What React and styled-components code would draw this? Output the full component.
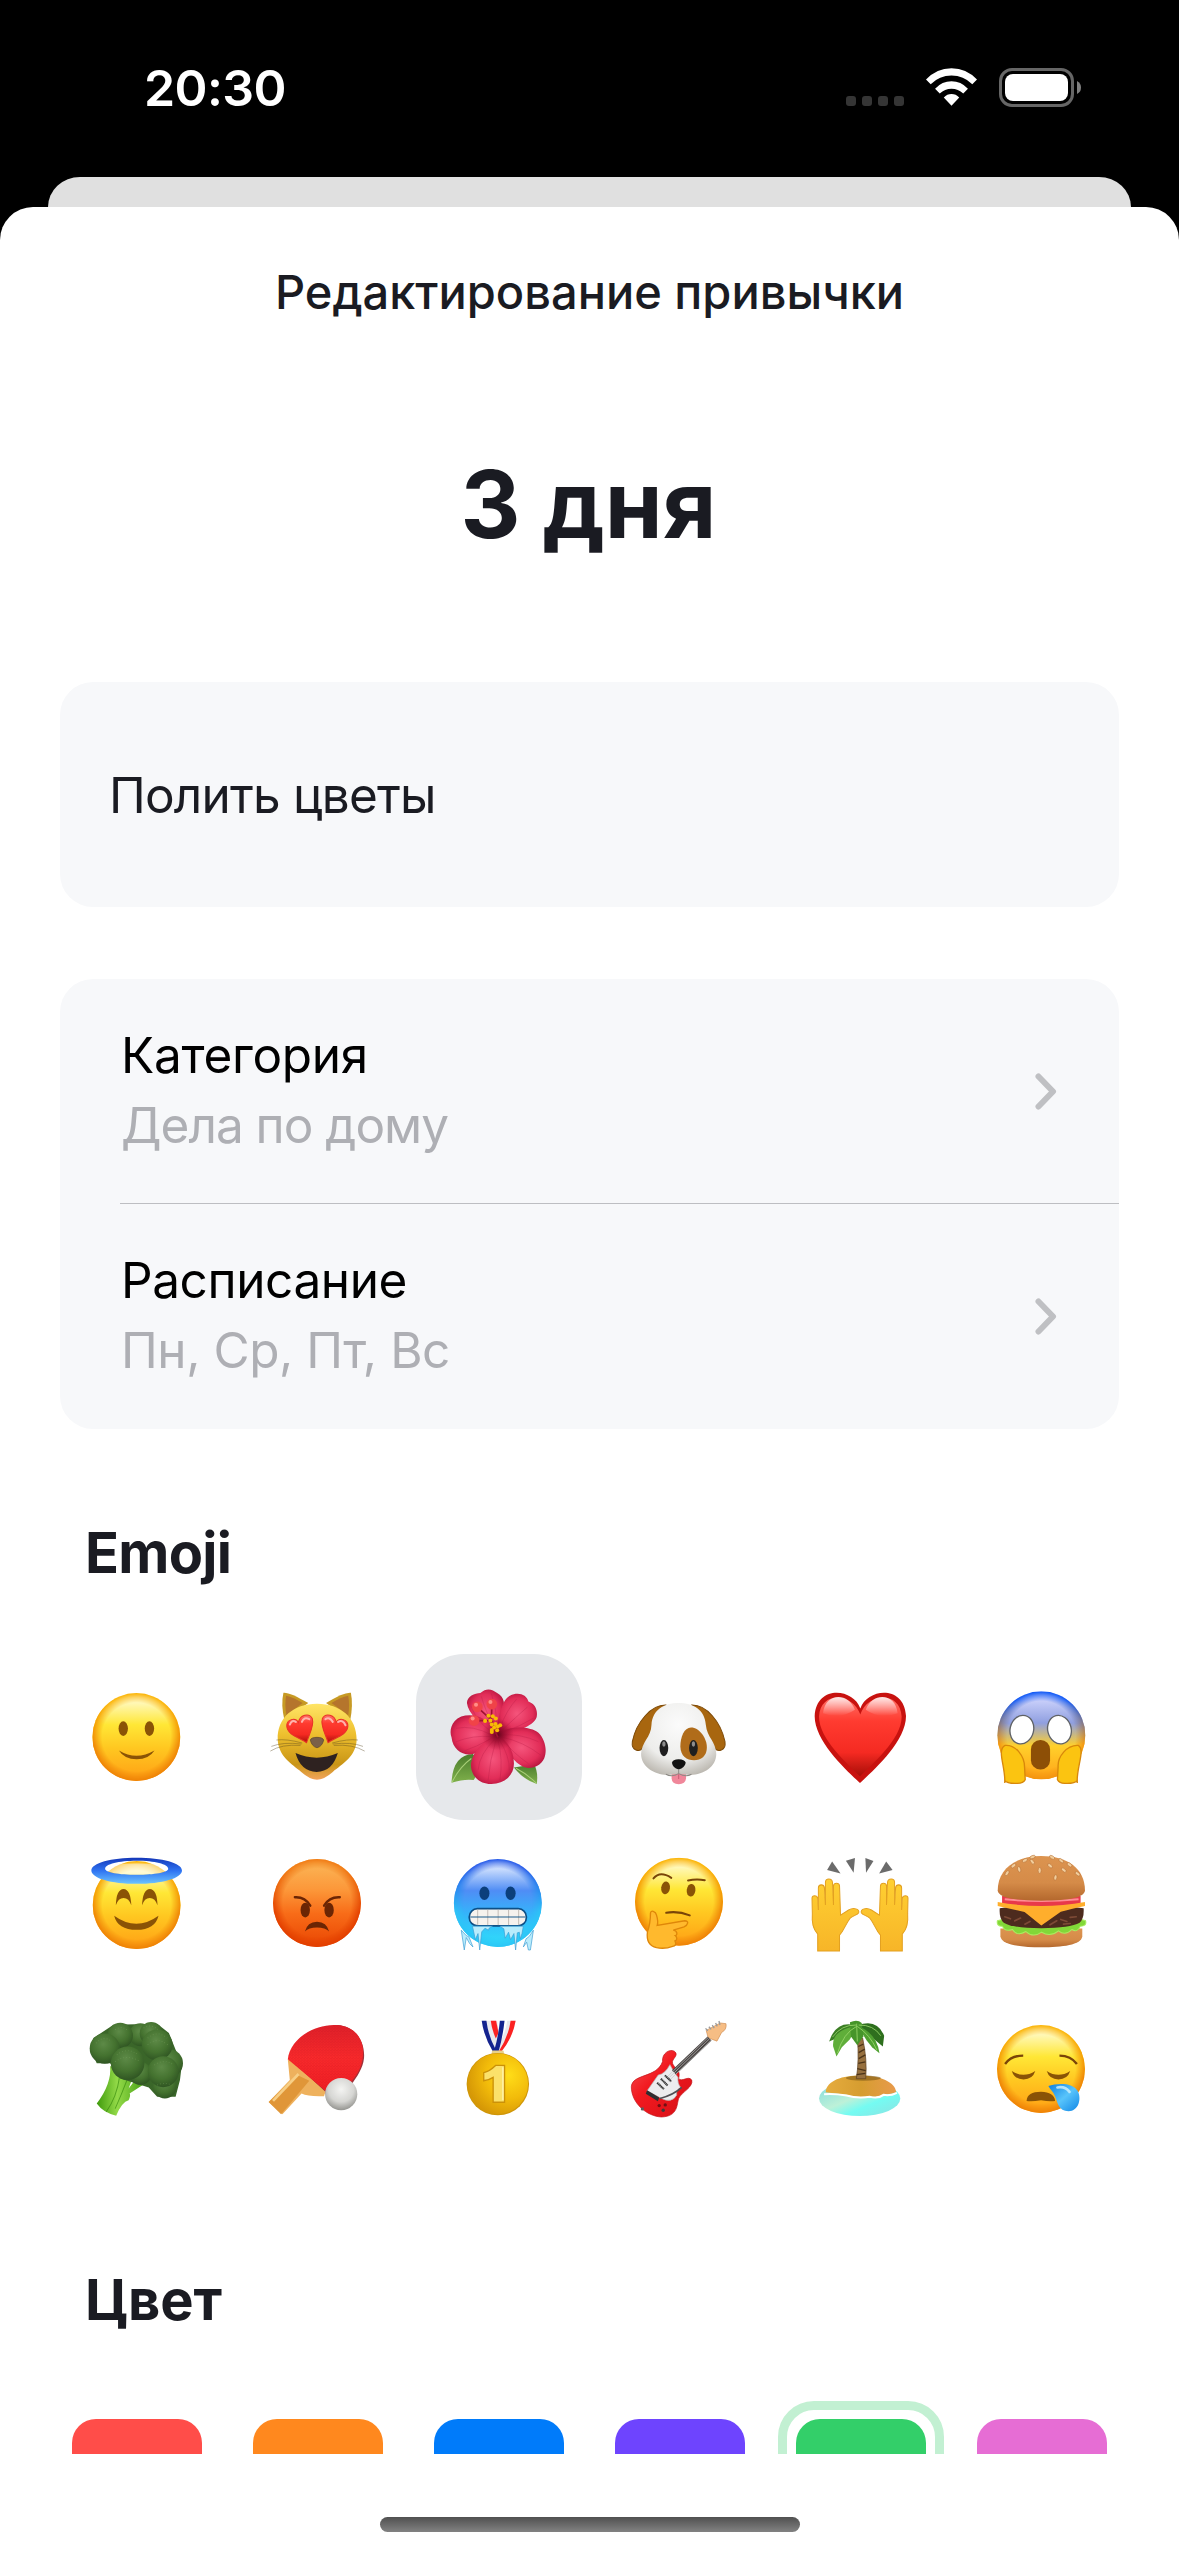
import React from "react";
import styled, { createGlobalStyle } from "styled-components";

const GlobalStyle = createGlobalStyle`
  * { box-sizing: border-box; }
  body {
    margin: 0;
    background: #000;
    font-family: Inter, "Liberation Sans", sans-serif;
  }
`;

const Screen = styled.div`
  display: flex;
  flex-direction: column;
  width: 1179px;
  height: 2556px;
  background: #000;
  overflow: hidden;
`;

const StatusBar = styled.header`
  display: flex;
  justify-content: space-between;
  align-items: flex-start;
  height: 177px;
  padding: 57px 98px 0 144px;
`;

const Time = styled.div`
  font-size: 50px;
  line-height: 62px;
  font-weight: 600;
  letter-spacing: -0.6px;
  color: #fff;
`;

const StatusIcons = styled.div`
  display: flex;
  padding-top: 11px;
`;

const Dots = styled.div`
  display: flex;
  gap: 6px;
  padding-top: 28px;
  margin-right: 22px;
`;

const Dot = styled.i`
  width: 10px;
  height: 10px;
  border-radius: 3px;
  background: #353535;
`;

const BackCard = styled.div`
  flex: none;
  height: 30px;
  margin: 0 48px;
  background: #e0e0e0;
  border-radius: 32px 32px 0 0 / 30px 30px 0 0;
`;

const Sheet = styled.main`
  flex: 1;
  display: flex;
  flex-direction: column;
  background: #fff;
  border-radius: 33px 33px 0 0;
`;

const Scroll = styled.div`
  flex: none;
  height: 2247px;
  overflow: hidden;
  padding-top: 55px;
`;

const Title = styled.h1`
  margin: 0;
  text-align: center;
  font-size: 47px;
  line-height: 60px;
  font-weight: 500;
  color: #1a1b22;
`;

const Days = styled.div`
  margin: 125px 2px 121px 0;
  text-align: center;
  font-size: 93px;
  line-height: 114px;
  font-weight: 700;
  color: #1a1b22;
`;

const Field = styled.div`
  display: flex;
  align-items: center;
  height: 225px;
  margin: 0 60px 72px;
  padding-left: 49px;
  border-radius: 33px;
  background: #f7f8fa;
  font-size: 49.5px;
  letter-spacing: -0.8px;
  color: #1a1b22;
`;

const Group = styled.div`
  margin: 0 60px;
  border-radius: 33px;
  background: #f7f8fa;
  overflow: hidden;
`;

const Row = styled.div`
  display: flex;
  align-items: center;
  justify-content: space-between;
  height: 225px;
  padding-right: 62px;
  margin-left: 60px;
  border-bottom: 1px solid ${(p) => (p.$last ? "transparent" : "#bdbec2")};
`;

const RowText = styled.div`
  padding: 0 0 2px 1px;
  font-size: 49.5px;
  line-height: 70px;
`;

const Label = styled.div`
  color: #000;
  letter-spacing: ${(p) => p.$track}px;
`;

const Value = styled.div`
  color: #aeafb4;
  letter-spacing: ${(p) => p.$track}px;
`;

const Heading = styled.h2`
  margin: ${(p) => p.$top}px 0 67px 85px;
  font-size: 56px;
  line-height: 68px;
  font-weight: 700;
  letter-spacing: ${(p) => p.$track}px;
  color: #1a1b22;
`;

const Grid = styled.div`
  display: grid;
  grid-template-columns: repeat(6, 166px);
  grid-auto-rows: 166px;
  column-gap: 15px;
  margin-left: 54px;
`;

const EmojiCell = styled.div`
  display: flex;
  align-items: center;
  justify-content: center;
  padding-right: 2px;
  border-radius: 48px;
  background: ${(p) => (p.$selected ? "#e6e8eb" : "transparent")};
`;

const SwatchCell = styled.div`
  padding: 9px;
  border: 9px solid ${(p) => (p.$selected ? "#c2f0d2" : "transparent")};
  border-radius: 36px;
`;

const Swatch = styled.div`
  height: 130px;
  border-radius: 24px;
  background: ${(p) => p.$color};
`;

const HomeBar = styled.div`
  width: 420px;
  height: 15px;
  margin: 63px auto 0;
  border-radius: 8px;
  background: linear-gradient(#505050, #828282);
`;

const DefsHolder = styled.svg`
  display: block;
  width: 0;
  height: 0;
`;

const stops = {
  yellow: ["#fffcd6", "#ffe736", "#ffc821", "#ff9e14"],
  angry: ["#fbb455", "#fc9638", "#f86c18", "#e94502"],
  cold: ["#e8f0ff", "#4f8df5", "#35b4fb", "#2fe0fa"],
  scream: ["#d3d8ff", "#8f9fe0", "#ffd02b", "#ffa318"],
};
const rims = {
  yellow: ["#fbb100", "#ee8206"],
  angry: ["#f07a14", "#e23f00"],
  cold: ["#1f55e8", "#2cc4f6"],
  scream: ["#0a55f5", "#f39410"],
};

const Defs = () => (
  <DefsHolder aria-hidden="true">
    <defs>
      {Object.entries(stops).map(([k, s]) => (
        <linearGradient key={k} id={`f-${k}`} x1="0" y1="0" x2="0" y2="1">
          <stop offset="0.05" stopColor={s[0]} />
          <stop offset="0.36" stopColor={s[1]} />
          <stop offset="0.62" stopColor={s[2]} />
          <stop offset="1" stopColor={s[3]} />
        </linearGradient>
      ))}
      {Object.entries(rims).map(([k, s]) => (
        <linearGradient key={k} id={`r-${k}`} x1="0" y1="0" x2="0" y2="1">
          <stop offset="0.1" stopColor={s[0]} />
          <stop offset="0.6" stopColor={s[1]} />
        </linearGradient>
      ))}
      <radialGradient id="rimFade">
        <stop offset="0.78" stopColor="#000" />
        <stop offset="0.93" stopColor="#a8a8a8" />
        <stop offset="1" stopColor="#fff" />
      </radialGradient>
      <mask id="rimMask" maskContentUnits="objectBoundingBox">
        <rect width="1" height="1" fill="url(#rimFade)" />
      </mask>
      <linearGradient id="cat" x1="0" y1="0" x2="0" y2="1">
        <stop offset="0" stopColor="#ffe566" />
        <stop offset="0.4" stopColor="#eec02f" />
        <stop offset="0.8" stopColor="#c99516" />
        <stop offset="1" stopColor="#f2a45c" />
      </linearGradient>
      <linearGradient id="heart" x1="0" y1="0" x2="0" y2="1">
        <stop offset="0" stopColor="#ff7168" />
        <stop offset="0.3" stopColor="#ff3b30" />
        <stop offset="0.7" stopColor="#f52a22" />
        <stop offset="1" stopColor="#a80e08" />
      </linearGradient>
      <linearGradient id="gloss" x1="0" y1="0" x2="0" y2="1">
        <stop offset="0" stopColor="#fff" stopOpacity="0.85" />
        <stop offset="1" stopColor="#fff" stopOpacity="0" />
      </linearGradient>
      <radialGradient id="petal" cx="0.5" cy="0.5" r="0.6">
        <stop offset="0" stopColor="#f5557c" />
        <stop offset="0.65" stopColor="#e22d58" />
        <stop offset="1" stopColor="#ad0f38" />
      </radialGradient>
      <radialGradient id="throat">
        <stop offset="0" stopColor="#65041b" />
        <stop offset="0.35" stopColor="#8d0a2a" stopOpacity="0.8" />
        <stop offset="1" stopColor="#a80f35" stopOpacity="0" />
      </radialGradient>
      <linearGradient id="leaf" x1="0" y1="0" x2="0" y2="1">
        <stop offset="0" stopColor="#4a7c2c" />
        <stop offset="1" stopColor="#7fb04b" />
      </linearGradient>
      <radialGradient id="dog" cx="0.5" cy="0.3" r="0.75">
        <stop offset="0" stopColor="#fbfbfb" />
        <stop offset="0.65" stopColor="#ededeb" />
        <stop offset="1" stopColor="#b9b5ad" />
      </radialGradient>
      <linearGradient id="hand" x1="0" y1="0" x2="0" y2="1">
        <stop offset="0" stopColor="#ffd032" />
        <stop offset="1" stopColor="#f7b528" />
      </linearGradient>
      <linearGradient id="halo" x1="0" y1="0" x2="0" y2="1">
        <stop offset="0" stopColor="#1437b8" />
        <stop offset="0.5" stopColor="#2f74f2" />
        <stop offset="1" stopColor="#6cc4ff" />
      </linearGradient>
      <linearGradient id="bun" x1="0" y1="0" x2="0" y2="1">
        <stop offset="0" stopColor="#dc9450" />
        <stop offset="0.6" stopColor="#d58b48" />
        <stop offset="1" stopColor="#b4682d" />
      </linearGradient>
      <radialGradient id="brocc" cx="0.45" cy="0.35" r="0.65">
        <stop offset="0" stopColor="#5d8a47" />
        <stop offset="0.6" stopColor="#44722f" />
        <stop offset="1" stopColor="#305623" />
      </radialGradient>
      <linearGradient id="stem">
        <stop offset="0" stopColor="#3f9a0c" />
        <stop offset="0.4" stopColor="#93da48" />
        <stop offset="1" stopColor="#3f9a10" />
      </linearGradient>
      <linearGradient id="paddle" x1="0" y1="0" x2="0" y2="1">
        <stop offset="0" stopColor="#e0202a" />
        <stop offset="0.5" stopColor="#fb2a2c" />
        <stop offset="1" stopColor="#f21e24" />
      </linearGradient>
      <radialGradient id="ball" cx="0.5" cy="0.35" r="0.65">
        <stop offset="0" stopColor="#f4f4f2" />
        <stop offset="0.6" stopColor="#d6d6d3" />
        <stop offset="1" stopColor="#949490" />
      </radialGradient>
      <radialGradient id="gold" cx="0.68" cy="0.36" r="0.7">
        <stop offset="0" stopColor="#ffdd18" />
        <stop offset="0.55" stopColor="#f2bb0a" />
        <stop offset="1" stopColor="#d69806" />
      </radialGradient>
      <linearGradient id="sea" x1="0" y1="0" x2="1" y2="1">
        <stop offset="0" stopColor="#7fd9dd" />
        <stop offset="0.45" stopColor="#bdf1d8" />
        <stop offset="0.65" stopColor="#74fbf2" />
        <stop offset="1" stopColor="#8fe0e0" />
      </linearGradient>
      <linearGradient id="sand">
        <stop offset="0" stopColor="#e6ac3e" />
        <stop offset="0.5" stopColor="#d69d30" />
        <stop offset="1" stopColor="#e89a4c" />
      </linearGradient>
      <linearGradient id="drop" x1="0" y1="0" x2="1" y2="1">
        <stop offset="0" stopColor="#0d7fe0" />
        <stop offset="0.5" stopColor="#58c4fb" />
        <stop offset="1" stopColor="#0f86e6" />
      </linearGradient>
      <linearGradient id="guitar" x1="0" y1="0" x2="1" y2="1">
        <stop offset="0" stopColor="#f4585a" />
        <stop offset="0.4" stopColor="#f21a20" />
        <stop offset="1" stopColor="#d50f15" />
      </linearGradient>
      <pattern id="weave" width="9" height="8" patternUnits="userSpaceOnUse">
        <path d="M0 2H6M4 6H9" stroke="#b80f18" strokeWidth="1.6" opacity="0.4" />
      </pattern>
    </defs>
  </DefsHolder>
);

const Face = ({ cx, cy, r = 131, kind = "yellow" }) => (
  <>
    <circle cx={cx} cy={cy} r={r} fill={`url(#f-${kind})`} />
    <circle cx={cx} cy={cy} r={r} fill={`url(#r-${kind})`} mask="url(#rimMask)" />
  </>
);

const Smile = () => (
  <>
    <Face cx={228} cy={261} />
    <g fill="#8a5306">
      <ellipse cx="189" cy="236" rx="14" ry="22" />
      <ellipse cx="267" cy="236" rx="14" ry="22" />
      <path d="M176 301Q228 332 282 301Q266 327 229 327Q192 327 176 301Z" />
    </g>
  </>
);

const eyeHeart =
  "M740 278C725 265 682 256 681 229C680 207 707 202 716 218C719 194 748 188 757 206C764 228 746 255 740 278Z";

const CatHearts = () => (
  <>
    <path d="M671 129Q690 127 745 160L674 210Q663 165 671 129Z" fill="#c79a24" />
    <path d="M679 138Q700 142 728 160L680 196Q674 165 679 138Z" fill="#b5752c" />
    <path d="M872 129Q850 127 798 160L870 210Q879 165 872 129Z" fill="#c79a24" />
    <path d="M864 138Q842 142 814 160L864 196Q869 165 864 138Z" fill="#b5752c" />
    <path d="M654 268C652 205 700 162 771 162C842 162 889 205 889 268C889 318 846 342 818 365Q792 388 771 388Q750 388 724 365C696 342 655 318 654 268Z" fill="url(#cat)" />
    <g stroke="#55431c" strokeWidth="1.5" fill="none" opacity="0.8">
      <path d="M725 282Q670 275 635 289M722 286Q665 282 632 303M727 279Q680 266 650 270" />
      <path d="M818 282Q873 275 908 289M821 286Q878 282 913 303M816 279Q863 266 893 270" />
    </g>
    <path d={eyeHeart} fill="url(#heart)" stroke="#e83028" strokeWidth="3" />
    <path d={eyeHeart} fill="url(#heart)" stroke="#e83028" strokeWidth="3" transform="translate(1544 0) scale(-1 1)" />
    <path d="M690 224Q696 208 708 216M726 216Q732 200 748 208M796 208Q808 200 818 216M834 216Q848 208 856 226" fill="none" stroke="#ffb3ad" strokeWidth="6" strokeLinecap="round" />
    <path d="M751 270Q754 262 771 262Q788 262 791 270Q786 290 771 293Q756 290 751 270Z" fill="#7a6048" stroke="#56432e" strokeWidth="2" />
    <path d="M707 309Q770 336 833 309Q817 365 770 365Q722 364 707 309Z" fill="#2e2220" />
  </>
);

const Flower = () => (
  <>
    <path d="M190 312Q130 315 126 397Q165 385 192 389Q220 350 190 312Z" fill="url(#leaf)" />
    <path d="M185 325Q150 350 128 395" fill="none" stroke="#a9cf78" strokeWidth="3" />
    <path d="M312 352Q340 388 380 401Q385 365 372 342Z" fill="url(#leaf)" />
    <path d="M318 354Q350 370 378 398" fill="none" stroke="#a9cf78" strokeWidth="3" />
    <path d="M262 252C210 225 175 190 172 160C172 140 195 130 212 130C232 112 248 120 262 130C285 142 286 165 278 190Z" fill="url(#petal)" />
    <path d="M262 252C262 210 275 150 300 138C325 125 350 135 355 155C375 162 383 180 380 200C376 225 320 250 262 252Z" fill="url(#petal)" />
    <path d="M262 252C235 200 190 190 155 200C122 215 120 245 126 262C130 300 160 318 190 312C225 305 240 270 262 252Z" fill="url(#petal)" />
    <path d="M262 252C300 225 360 228 385 248C405 268 412 300 402 325C390 352 355 358 340 350C300 330 280 280 262 252Z" fill="url(#petal)" />
    <path d="M262 252C225 270 190 300 184 340C182 378 210 402 245 401C285 400 312 375 312 340C312 300 290 270 262 252Z" fill="url(#petal)" />
    <g stroke="#b31a43" strokeWidth="2" fill="none" opacity="0.45">
      <path d="M245 245Q200 215 185 170M255 235Q225 180 215 140M262 225Q260 180 245 132" />
      <path d="M270 235Q290 180 320 148M275 242Q320 200 352 172M280 246Q330 230 370 205" />
      <path d="M245 255Q190 225 140 235M245 260Q190 255 140 275M240 268Q200 290 165 302" />
      <path d="M275 255Q330 250 385 275M278 262Q340 275 392 315M278 268Q310 310 355 340" />
      <path d="M255 268Q210 310 205 360M258 272Q240 330 235 390M265 272Q280 330 270 390M268 268Q300 320 298 360" />
    </g>
    <circle cx="264" cy="254" r="48" fill="url(#throat)" />
    <path d="M264 262L236 195M250 215L203 172M245 218L246 165M238 212L193 212" stroke="#9f1231" strokeWidth="5" fill="none" />
    <g fill="#f04348">
      <circle cx="203" cy="171" r="16" />
      <circle cx="246" cy="163" r="16" />
      <circle cx="193" cy="212" r="16" />
    </g>
    <g fill="#ff8f89">
      <circle cx="199" cy="165" r="6" />
      <circle cx="242" cy="157" r="6" />
      <circle cx="189" cy="206" r="6" />
    </g>
    <g fill="#f7bb06">
      {[[236, 198], [249, 199], [226, 213], [242, 212], [258, 206], [246, 224], [257, 222], [271, 226], [246, 240], [253, 233], [262, 241], [246, 246], [264, 230]].map(([x, y]) => (
        <circle key={`${x}-${y}`} cx={x} cy={y} r="6" />
      ))}
    </g>
  </>
);

const Dog = () => (
  <>
    <path d="M768 166C725 165 680 215 668 275C664 302 690 308 700 292C720 262 735 235 768 166Z" fill="#a8660f" stroke="#7d4a08" strokeWidth="3" />
    <path d="M845 166C888 165 932 215 944 275C948 302 922 308 912 292C892 262 878 235 845 166Z" fill="#a8660f" stroke="#7d4a08" strokeWidth="3" />
    <path d="M785 365H828V385Q826 402 806 402Q786 402 785 385Z" fill="#f0879a" />
    <path d="M806 160C762 160 728 180 725 225C724 262 695 275 694 312C694 350 735 374 770 374Q790 374 806 370Q822 374 842 374C880 374 918 350 918 312C918 275 890 262 887 225C884 180 850 160 806 160Z" fill="url(#dog)" />
    <path d="M843 233C868 233 890 265 890 292C890 318 872 330 852 330C830 330 812 318 811 290C811 262 822 233 843 233Z" fill="#b06c1a" />
    <ellipse cx="762" cy="294" rx="13" ry="24" fill="#1f1f1f" />
    <ellipse cx="850" cy="294" rx="13" ry="24" fill="#1f1f1f" />
    <ellipse cx="762" cy="282" rx="5" ry="8" fill="#8d8d8d" />
    <ellipse cx="850" cy="282" rx="5" ry="8" fill="#8d8d8d" />
    <path d="M786 338Q788 327 806 327Q824 327 827 338Q824 354 806 358Q788 354 786 338Z" fill="#111" />
    <path d="M806 358V370M806 370Q785 382 768 372M806 370Q828 382 844 372" stroke="#8d8a85" strokeWidth="3" fill="none" />
    <path d="M806 372V386" stroke="#c75f74" strokeWidth="3" />
  </>
);

const Heart = () => (
  <>
    <path d="M271 176C250 115 140 105 135 198C134 275 235 365 270 398C305 365 408 275 407 198C402 105 292 115 271 176Z" fill="#c8120f" />
    <path d="M271 194C248 128 152 122 148 200C147 268 238 345 270 378C302 345 395 268 394 200C390 122 292 128 271 194Z" fill="url(#heart)" />
    <path d="M160 190C165 130 235 125 255 180Q210 210 160 190ZM382 190C377 130 307 125 287 180Q330 210 382 190Z" fill="url(#gloss)" />
  </>
);

const Scream = () => (
  <>
    <Face cx={814} cy={256} kind="scream" />
    <ellipse cx="756" cy="239" rx="35" ry="43" fill="#fff" stroke="#5f6266" strokeWidth="4" transform="rotate(14 756 239)" />
    <ellipse cx="868" cy="239" rx="35" ry="43" fill="#fff" stroke="#5f6266" strokeWidth="4" transform="rotate(-14 868 239)" />
    <rect x="783" y="270" width="57" height="88" rx="28" fill="#8d4f06" />
    <path d="M705 398C708 350 680 300 706 286C740 284 764 320 764 350L766 388Q760 400 740 399Q712 400 705 390Z" fill="#fbc411" stroke="#d8880b" strokeWidth="4" />
    <path d="M921 398C918 350 946 300 924 286C890 284 862 320 864 350L862 388Q868 400 886 399Q914 400 921 390Z" fill="#fbc411" stroke="#d8880b" strokeWidth="4" />
  </>
);

const Angel = () => (
  <>
    <Face cx={229} cy={765} />
    <g fill="#8a5306">
      <path d="M167 766Q168 718 190 717Q211 718 213 766Q206 744 190 744Q174 744 167 766Z" />
      <path d="M245 766Q247 718 268 717Q290 718 291 766Q284 744 268 744Q252 744 245 766Z" />
      <path d="M162 797Q228 845 294 797Q284 839 229 839Q172 839 162 797Z" />
    </g>
    <ellipse cx="229" cy="658" rx="94" ry="17" fill="#fff" opacity="0.45" />
    <path d="M229 624C305 624 364 640 364 662C364 685 305 702 229 702C153 702 94 685 94 662C94 640 153 624 229 624ZM229 633C176 633 135 643 135 657C135 668 176 675 229 675C282 675 323 668 323 657C323 643 282 633 229 633Z" fill="url(#halo)" fillRule="evenodd" />
  </>
);

const Angry = () => (
  <>
    <Face cx={771} cy={759} kind="angry" />
    <g fill="#6b2504">
      <ellipse cx="736" cy="780" rx="14" ry="22" />
      <ellipse cx="807" cy="780" rx="14" ry="22" />
      <path d="M735 844Q742 816 771 815Q800 816 807 844Q796 832 771 832Q746 832 735 844Z" />
    </g>
    <path d="M705 742Q735 740 751 767M839 742Q808 740 792 767" fill="none" stroke="#6b2504" strokeWidth="7" strokeLinecap="round" />
  </>
);

const Cold = () => (
  <>
    <Face cx={264} cy={759} kind="cold" />
    <ellipse cx="224" cy="730" rx="15" ry="20" fill="#0b3f7c" />
    <ellipse cx="302" cy="730" rx="15" ry="20" fill="#0b3f7c" />
    <rect x="179" y="776" width="170" height="51" rx="24" fill="#f6f2ee" stroke="#0d4f86" strokeWidth="5" />
    <path d="M204 779V825M234 779V825M265 779V825M296 779V825M326 779V825" stroke="#b9b2ac" strokeWidth="2.5" />
    <path d="M182 801H346" stroke="#1d5c8c" strokeWidth="3" />
    <path d="M188 828H248L238 834L236 840L226 834L216 845L210 899L205 850L197 868L190 835ZM270 828H340L336 850L331 866L328 846L322 848L317 899L312 850L302 868L296 846L286 864L282 836ZM155 840L170 856L178 860L190 890L180 880L170 862L164 899ZM370 840L358 858L348 866L340 890L350 876L355 899L361 899Z" fill="#b9ecfc" stroke="#3a9cd4" strokeWidth="2" />
  </>
);

const Thinking = () => (
  <>
    <Face cx={807} cy={755} />
    <ellipse cx="767" cy="714" rx="13" ry="19" fill="#8a5306" transform="rotate(8 767 714)" />
    <ellipse cx="843" cy="721" rx="13" ry="19" fill="#8a5306" transform="rotate(8 843 721)" />
    <path d="M731 686Q750 662 784 684M834 692Q858 686 884 691M769 788Q805 782 839 796" fill="none" stroke="#7a4508" strokeWidth="6" strokeLinecap="round" />
    <path d="M722 790C722 778 738 784 740 795Q746 815 742 826L824 812C838 812 834 824 822 830L790 840C804 842 802 856 796 856C802 862 802 870 795 872C800 882 796 888 788 888Q765 897 740 892C714 886 710 868 713 845Q722 820 722 790Z" fill="#ffb92d" stroke="#df8709" strokeWidth="4" />
  </>
);

const palm =
  "M144 902V852C128 835 126 815 128 790L127 745C127 735 142 735 144 745L146 780V714C146 702 163 702 164 714L167 765V698C167 684 187 684 188 698L191 765V708C192 698 208 698 209 708L212 795L236 780C250 772 270 776 266 788C262 796 250 795 240 805C225 825 222 842 209 855V902Z";

const Hands = () => (
  <>
    <path d={palm} fill="url(#hand)" stroke="#e3a020" strokeWidth="3" />
    <path d={palm} fill="url(#hand)" stroke="#e3a020" strokeWidth="3" transform="translate(540 0) scale(-1 1)" />
    <g fill="#6b6b6b">
      <path d="M187 635L172 661L212 671Z" />
      <path d="M228 633L255 625L251 669Z" />
      <path d="M286 625L310 634L288 669Z" />
      <path d="M348 635L367 661L327 671Z" />
    </g>
  </>
);

const Burger = () => (
  <>
    <path d="M692 835H936V858C934 884 875 891 814 891C753 891 695 884 692 858Z" fill="url(#bun)" />
    <path d="M683 812Q720 800 814 800Q910 800 946 812Q950 828 930 828Q922 848 905 838Q885 858 865 842Q840 862 815 846Q790 864 768 844Q742 860 728 838Q705 846 698 828Q680 828 683 812Z" fill="#82d838" stroke="#a8ec60" strokeWidth="3" />
    <path d="M690 775Q814 755 940 775Q942 805 928 818Q900 834 814 834Q728 834 702 818Q688 805 690 775Z" fill="#4d2b1e" />
    <path d="M705 800L722 806M735 812L752 804M765 822L780 814M840 824L860 812M872 808L890 814M900 802L918 800M880 822L900 820" stroke="#7d4a36" strokeWidth="5" strokeLinecap="round" />
    <path d="M697 738H931V768H697Z" fill="#e8394a" />
    <path d="M705 748Q814 758 925 748" stroke="#ff8d94" strokeWidth="6" fill="none" />
    <path d="M684 756Q814 780 944 756L944 768Q900 778 872 785L814 826L764 786Q720 776 684 768Z" fill="#ffae2c" />
    <path d="M684 722C684 655 740 619 814 619C890 619 944 655 944 722C942 742 900 752 814 752C728 752 686 742 684 722Z" fill="url(#bun)" />
    <g fill="#f2cd9b">
      {[[712, 670, 35], [748, 659, -15], [731, 648, 50], [787, 636, -40], [809, 662, 0], [840, 648, -50], [856, 683, 10], [881, 661, -50], [873, 633, -50], [765, 632, 60], [898, 645, -50], [922, 672, -50], [846, 623, -60], [788, 622, 70]].map(([x, y, a]) => (
        <ellipse key={`${x}-${y}`} cx={x} cy={y} rx="4.5" ry="8.5" transform={`rotate(${a} ${x} ${y})`} stroke="#b26d34" strokeWidth="1.5" />
      ))}
    </g>
  </>
);

const Broccoli = () => (
  <>
    <path d="M150 1248Q155 1300 110 1360Q130 1388 168 1396Q185 1355 205 1350Q212 1335 208 1330L262 1295L232 1280L205 1315L218 1280Z" fill="url(#stem)" />
    <path d="M178 1280Q170 1340 138 1385M200 1290Q185 1330 165 1375" stroke="#2f8208" strokeWidth="3" fill="none" opacity="0.6" />
    <path d="M100 1165L160 1125L290 1122L325 1150L345 1200L364 1240L358 1290L345 1340L290 1340L265 1312L180 1285L150 1240L110 1240L92 1200Z" fill="#3a6629" />
    <g fill="url(#brocc)">
      <circle cx="240" cy="1155" r="34" />
      <circle cx="325" cy="1240" r="42" />
      <circle cx="313" cy="1310" r="35" />
      <circle cx="272" cy="1151" r="34" />
      <circle cx="180" cy="1157" r="38" />
      <circle cx="134" cy="1196" r="45" />
      <circle cx="240" cy="1270" r="34" />
      <circle cx="290" cy="1185" r="46" />
      <circle cx="308" cy="1265" r="46" />
      <circle cx="202" cy="1240" r="50" />
    </g>
    <g stroke="#7fa865" strokeWidth="3" strokeDasharray="2 7" fill="none" opacity="0.5">
      <path d="M108 1180Q130 1155 155 1175M165 1140Q185 1125 205 1145M170 1215Q200 1190 235 1215M165 1235Q200 1210 240 1235M262 1165Q290 1140 320 1165M262 1185Q290 1160 322 1185M282 1245Q310 1225 340 1245M250 1135Q272 1120 292 1140M290 1305Q310 1295 335 1305" />
    </g>
  </>
);

const PingPong = () => (
  <>
    <path d="M830 1126C890 1130 915 1180 911 1225C908 1255 890 1280 876 1300L800 1335L715 1255Z" fill="#a03038" />
    <path d="M684 1228L700 1236L796 1325L792 1338Q745 1340 725 1330L668 1392L627 1355L690 1290Z" fill="#eeb15d" />
    <path d="M712 1275L748 1292L664 1392L627 1355Z" fill="#e09638" />
    <path d="M716 1272L640 1352" stroke="#f7cf86" strokeWidth="8" />
    <path d="M684 1228C690 1170 760 1122 830 1126C890 1130 912 1175 908 1215C905 1255 888 1278 868 1300L796 1322Z" fill="url(#paddle)" />
    <path d="M684 1228C690 1170 760 1122 830 1126C890 1130 912 1175 908 1215C905 1255 888 1278 868 1300L796 1322Z" fill="url(#weave)" />
    <circle cx="843" cy="1332" r="48" fill="url(#ball)" />
  </>
);

const Medal = () => (
  <>
    <path d="M292 1113H317Q308 1165 272 1206H254Q286 1160 292 1113Z" fill="#e9e9ee" />
    <path d="M302 1113H317Q308 1165 274 1206H266Q296 1160 302 1113Z" fill="#fb2222" />
    <path d="M216 1113H262Q268 1160 280 1180L262 1206H250Q222 1160 216 1113Z" fill="#e9e9ee" />
    <path d="M216 1113H230Q236 1160 258 1200L250 1206Q222 1160 216 1113Z" fill="#14238f" />
    <path d="M243 1113H259L266 1150L258 1166Q246 1140 243 1113Z" fill="#fb2222" />
    <path d="M270 1113H284Q278 1165 266 1206H252Q266 1160 270 1113Z" fill="#14238f" />
    <rect x="246" y="1202" width="36" height="14" rx="4" fill="#e8d08a" />
    <circle cx="264" cy="1302" r="93" fill="#cf9608" />
    <circle cx="264" cy="1301" r="90" fill="url(#gold)" />
    <path d="M284 1246H258Q240 1264 222 1268V1292Q238 1290 250 1282V1356H284Z" fill="#fbe16a" stroke="#cb9108" strokeWidth="4" />
    <path d="M279 1252V1350" stroke="#fff3b0" strokeWidth="4" />
  </>
);

const Guitar = () => (
  <>
    <path d="M888 1142L930 1120L947 1122Q950 1140 934 1148L920 1174L894 1164Z" fill="#f6bd84" stroke="#cf8d52" strokeWidth="2" />
    <path d="M886 1136L893 1143M896 1131L903 1139M906 1126L912 1135M916 1120L921 1130M926 1114L929 1126" stroke="#9b9b9b" strokeWidth="4" />
    <path d="M758 1235C755 1205 790 1192 798 1210C802 1222 780 1230 790 1245C800 1260 812 1262 806 1285C815 1298 835 1275 845 1290C850 1312 815 1325 806 1345C800 1362 805 1398 755 1400C710 1398 665 1358 665 1310C668 1270 740 1285 758 1235Z" fill="url(#guitar)" stroke="#c01016" strokeWidth="2" />
    <path d="M780 1244L790 1262L804 1282Q802 1300 812 1312Q798 1318 800 1335Q785 1360 755 1345L712 1322L745 1275Q765 1272 780 1244Z" fill="#ececee" stroke="#b5b5b5" strokeWidth="2" />
    <path d="M792 1267L898 1166" stroke="#4a4543" strokeWidth="17" />
    <path d="M768 1284L894 1163M771 1289L898 1167M776 1293L902 1172" stroke="#c4c4c4" strokeWidth="2" />
    <path d="M742 1298L762 1317M753 1286L773 1306M765 1276L784 1294" stroke="#333" strokeWidth="6" strokeDasharray="4 1" />
    <path d="M712 1320L748 1342L744 1353L708 1331Z" fill="#2e2e30" />
    <path d="M750 1345Q790 1335 815 1312" stroke="#4f4f54" strokeWidth="5" fill="none" />
    <circle cx="748" cy="1366" r="5" fill="#701014" />
    <circle cx="766" cy="1364" r="5" fill="#701014" />
    <circle cx="760" cy="1380" r="5" fill="#3a3a3a" />
    <circle cx="698" cy="1376" r="5" fill="#5b5b5b" />
  </>
);

const Island = () => (
  <>
    <ellipse cx="269" cy="1345" rx="121" ry="52" fill="url(#sea)" />
    <path d="M168 1326C170 1290 220 1276 270 1276C330 1276 375 1295 378 1326Q360 1334 340 1332Q325 1345 300 1338Q260 1345 230 1334Q195 1330 168 1326Z" fill="url(#sand)" />
    <path d="M163 1332Q195 1330 230 1336Q262 1346 300 1340Q325 1346 340 1334Q360 1338 380 1328" stroke="#fff" strokeWidth="6" fill="none" />
    <ellipse cx="280" cy="1284" rx="52" ry="8" fill="#7f5a18" opacity="0.6" />
    <path d="M262 1165H278Q292 1230 287 1286H259Q268 1230 262 1165Z" fill="#96703f" stroke="#5b3f20" strokeWidth="2" />
    <path d="M265 1190L280 1183M266 1208L284 1198M266 1226L286 1215M265 1240L286 1236M262 1256L287 1262M260 1274L286 1270" stroke="#4b3318" strokeWidth="4" />
    <path d="M262 1128Q200 1108 178 1175Q225 1158 262 1128Z" fill="#3a7d24" />
    <path d="M262 1128Q320 1105 342 1158L338 1190Q300 1158 262 1128Z" fill="#2e6f1e" />
    <path d="M262 1128Q185 1140 190 1190L200 1220L216 1192L228 1180L240 1168Z" fill="#5fae3a" />
    <path d="M262 1128Q320 1150 328 1210L306 1192L290 1172Z" fill="#4fa030" />
    <path d="M240 1118Q262 1108 275 1120L280 1160L262 1186L243 1160Z" fill="#46952a" />
    <path d="M260 1130Q220 1150 203 1210M262 1130Q300 1155 320 1200M260 1122L262 1175M258 1126Q215 1125 188 1162M266 1126Q310 1125 332 1158" stroke="#9bd86c" strokeWidth="2.5" fill="none" />
  </>
);

const Sleepy = () => (
  <>
    <Face cx={813} cy={1257} />
    <path d="M706 1242Q724 1217 760 1217M920 1242Q902 1217 868 1217" fill="none" stroke="#7a4508" strokeWidth="7" />
    <g fill="#8a5306">
      <path d="M726 1263Q760 1286 796 1263Q788 1288 761 1288Q734 1288 726 1263Z" />
      <path d="M830 1263Q865 1286 900 1263Q892 1288 865 1288Q838 1288 830 1263Z" />
      <path d="M770 1352Q772 1325 813 1325Q852 1326 855 1352Q840 1355 813 1350Q785 1355 770 1352Z" />
    </g>
    <path d="M835 1308C860 1300 905 1296 922 1322C935 1345 925 1383 895 1383C865 1382 862 1356 855 1338C850 1325 840 1318 835 1308Z" fill="url(#drop)" />
    <path d="M862 1312Q885 1308 898 1325" stroke="#d2f2ff" strokeWidth="8" strokeLinecap="round" fill="none" opacity="0.8" />
  </>
);

const emojis = [
  ["smile", 84, 118, Smile],
  ["cat", 628, 118, CatHearts],
  ["flower", 121.5, 118, Flower],
  ["dog", 664, 118, Dog],
  ["heart", 127, 118, Heart],
  ["scream", 670, 118, Scream],
  ["angel", 84, 616, Angel],
  ["angry", 628, 616, Angry],
  ["cold", 121.5, 616, Cold],
  ["thinking", 664, 616, Thinking],
  ["hands", 127, 616, Hands],
  ["burger", 670, 616, Burger],
  ["broccoli", 84, 1114, Broccoli],
  ["pingpong", 628, 1114, PingPong],
  ["medal", 121.5, 1114, Medal],
  ["guitar", 664, 1114, Guitar],
  ["island", 127, 1114, Island],
  ["sleepy", 670, 1114, Sleepy],
];

const EmojiIcon = styled.svg`
  display: block;
  width: 96px;
  height: 96px;
  overflow: visible;
`;

const colors = ["#ff4d49", "#ff881e", "#007bfa", "#6e44fe", "#33cf69", "#e66dd4"];

const Wifi = () => (
  <svg width="51" height="38" viewBox="0 0 152 112">
    <g fill="#fff">
      <path d="M0 34Q31 0 76 0Q121 0 152 34L138 48Q112 22 76 22Q40 22 14 48Z" />
      <path d="M27 61Q48 39 76 39Q104 39 125 61L111 75Q96 61 76 61Q56 61 41 75Z" />
      <path d="M53 87Q63 77 76 77Q89 77 99 87L76 112Z" />
    </g>
  </svg>
);

const IconGap = styled.span`
  width: 22px;
`;

const Battery = () => (
  <svg width="82" height="39" viewBox="0 0 82 39">
    <rect x="1.5" y="1.5" width="72" height="36" rx="11.5" fill="none" stroke="#666" strokeWidth="3" />
    <rect x="6" y="6" width="63" height="27" rx="8" fill="#fff" />
    <path d="M78 13Q82 15 82 19.5Q82 24 78 26Z" fill="#808080" />
  </svg>
);

const Chevron = () => (
  <svg width="22" height="37" viewBox="0 0 22 37">
    <path d="M3.5 3.5L18 18.5L3.5 33.5" fill="none" stroke="#bfc0c3" strokeWidth="6" strokeLinecap="round" strokeLinejoin="round" />
  </svg>
);

const rows = [
  { label: "Категория", value: "Дела по дому", labelTrack: -0.3, valueTrack: -1 },
  { label: "Расписание", value: "Пн, Ср, Пт, Вс", labelTrack: -0.4, valueTrack: -0.45 },
];

export default function App() {
  return (
    <Screen>
      <GlobalStyle />
      <Defs />
      <StatusBar>
        <Time>20:30</Time>
        <StatusIcons>
          <Dots>
            <Dot />
            <Dot />
            <Dot />
            <Dot />
          </Dots>
          <Wifi />
          <IconGap />
          <Battery />
        </StatusIcons>
      </StatusBar>
      <BackCard />
      <Sheet>
        <Scroll>
          <Title>Редактирование привычки</Title>
          <Days>3 дня</Days>
          <Field>Полить цветы</Field>
          <Group>
            {rows.map((r, i) => (
              <Row key={r.label} $last={i === rows.length - 1}>
                <RowText>
                  <Label $track={r.labelTrack}>{r.label}</Label>
                  <Value $track={r.valueTrack}>{r.value}</Value>
                </RowText>
                <Chevron />
              </Row>
            ))}
          </Group>
          <Heading $top={90} $track={-0.7}>Emoji</Heading>
          <Grid>
            {emojis.map(([name, x, y, Art]) => (
              <EmojiCell key={name} $selected={name === "flower"}>
                <EmojiIcon viewBox={`${x} ${y} 286 286`}>
                  <Art />
                </EmojiIcon>
              </EmojiCell>
            ))}
          </Grid>
          <Heading $top={114} $track={0}>Цвет</Heading>
          <Grid>
            {colors.map((c, i) => (
              <SwatchCell key={c} $selected={i === 4}>
                <Swatch $color={c} />
              </SwatchCell>
            ))}
          </Grid>
        </Scroll>
        <HomeBar />
      </Sheet>
    </Screen>
  );
}
